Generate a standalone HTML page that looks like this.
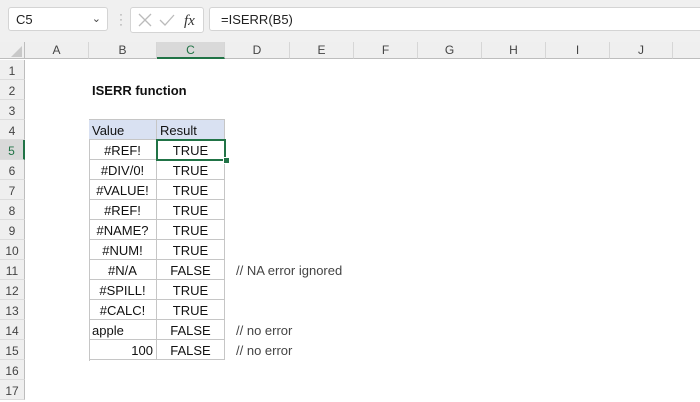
<!DOCTYPE html>
<html><head><style>
body{margin:0;width:700px;height:400px;overflow:hidden;background:#fff;font-family:"Liberation Sans",sans-serif;position:relative}
.top{position:absolute;left:0;top:0;width:700px;height:42px;background:#f0f0f0}
.box{position:absolute;background:#fff;border:1px solid #d4d4d4;border-radius:3px;font-size:13px;color:#222}
.hdr{position:absolute;top:42px;height:17px;background:#efefef;border-bottom:1px solid #bdbdbd;font-size:12px;color:#444;text-align:center;line-height:17px;box-sizing:border-box}
.rh{position:absolute;left:0;width:25px;height:20px;background:#efefef;border-right:1px solid #bdbdbd;border-bottom:1px solid #dcdcdc;font-size:12px;color:#444;text-align:center;line-height:22px;box-sizing:border-box}
.c{position:absolute;height:20px;line-height:22px;font-size:13px;color:#111;box-sizing:border-box;white-space:nowrap}
.t{border-right:1px solid #c6c6c6;border-bottom:1px solid #c6c6c6}
</style></head><body>
<div class="top"></div>
<div class="box" style="left:8px;top:7px;width:100px;height:24px;line-height:24px;padding-left:7px;box-sizing:border-box">C5<span style="position:absolute;right:6px;top:-1px;font-size:11px;color:#444">&#8964;</span></div>
<div style="position:absolute;left:119px;top:12px;color:#999;font-size:12px;line-height:5px">·<br>·<br>·</div>
<div class="box" style="left:130px;top:7px;width:72px;height:24px"><svg width="72" height="24"><path d="M8 6l12 12M20 6L8 18" stroke="#bbb" stroke-width="1.3" fill="none"/><path d="M29 12l5 5 9-10" stroke="#bbb" stroke-width="1.3" fill="none"/><text x="53" y="17" font-family="Liberation Serif" font-style="italic" font-size="15" fill="#333">fx</text></svg></div>
<div class="box" style="left:209px;top:7px;width:500px;height:24px;line-height:24px;padding-left:11px;box-sizing:border-box">=ISERR(B5)</div>
<div class="hdr" style="left:0;width:25px;border-right:1px solid #bdbdbd"><svg width="25" height="17" style="position:absolute;left:0;top:0"><path d="M22 4v11H11z" fill="#c8c8c8"/></svg></div>
<div class="hdr" style="left:25px;width:64px;border-right:1px solid #d6d6d6">A</div>
<div class="hdr" style="left:89px;width:68px;border-right:1px solid #d6d6d6">B</div>
<div class="hdr" style="left:157px;width:68px;border-right:1px solid #d6d6d6;background:#d9d9d9;border-bottom:2px solid #217346;color:#217346">C</div>
<div class="hdr" style="left:225px;width:65px;border-right:1px solid #d6d6d6">D</div>
<div class="hdr" style="left:290px;width:64px;border-right:1px solid #d6d6d6">E</div>
<div class="hdr" style="left:354px;width:64px;border-right:1px solid #d6d6d6">F</div>
<div class="hdr" style="left:418px;width:64px;border-right:1px solid #d6d6d6">G</div>
<div class="hdr" style="left:482px;width:64px;border-right:1px solid #d6d6d6">H</div>
<div class="hdr" style="left:546px;width:64px;border-right:1px solid #d6d6d6">I</div>
<div class="hdr" style="left:610px;width:63px;border-right:1px solid #d6d6d6">J</div>
<div class="hdr" style="left:673px;width:30px"></div>
<div class="rh" style="top:60px">1</div><div class="rh" style="top:80px">2</div><div class="rh" style="top:100px">3</div><div class="rh" style="top:120px">4</div>
<div class="rh" style="top:140px;background:#d9d9d9;border-right:2px solid #217346;color:#217346">5</div>
<div class="rh" style="top:160px">6</div><div class="rh" style="top:180px">7</div><div class="rh" style="top:200px">8</div><div class="rh" style="top:220px">9</div><div class="rh" style="top:240px">10</div><div class="rh" style="top:260px">11</div><div class="rh" style="top:280px">12</div><div class="rh" style="top:300px">13</div><div class="rh" style="top:320px">14</div><div class="rh" style="top:340px">15</div><div class="rh" style="top:360px">16</div><div class="rh" style="top:380px">17</div>
<div class="c" style="left:92px;top:80px;font-weight:bold">ISERR function</div>
<div style="position:absolute;left:89px;top:119px;width:136px;height:242px;border-left:1px solid #c6c6c6;border-top:1px solid #c6c6c6;box-sizing:border-box"></div>
<div class="c t" style="left:89px;top:120px;width:68px;background:#d9e1f2;padding-left:3px">Value</div>
<div class="c t" style="left:157px;top:120px;width:68px;background:#d9e1f2;padding-left:3px">Result</div>
<div class="c t" style="left:89px;top:140px;width:68px;text-align:center">#REF!</div><div class="c t" style="left:157px;top:140px;width:68px;text-align:center">TRUE</div>
<div class="c t" style="left:89px;top:160px;width:68px;text-align:center">#DIV/0!</div><div class="c t" style="left:157px;top:160px;width:68px;text-align:center">TRUE</div>
<div class="c t" style="left:89px;top:180px;width:68px;text-align:center">#VALUE!</div><div class="c t" style="left:157px;top:180px;width:68px;text-align:center">TRUE</div>
<div class="c t" style="left:89px;top:200px;width:68px;text-align:center">#REF!</div><div class="c t" style="left:157px;top:200px;width:68px;text-align:center">TRUE</div>
<div class="c t" style="left:89px;top:220px;width:68px;text-align:center">#NAME?</div><div class="c t" style="left:157px;top:220px;width:68px;text-align:center">TRUE</div>
<div class="c t" style="left:89px;top:240px;width:68px;text-align:center">#NUM!</div><div class="c t" style="left:157px;top:240px;width:68px;text-align:center">TRUE</div>
<div class="c t" style="left:89px;top:260px;width:68px;text-align:center">#N/A</div><div class="c t" style="left:157px;top:260px;width:68px;text-align:center">FALSE</div>
<div class="c t" style="left:89px;top:280px;width:68px;text-align:center">#SPILL!</div><div class="c t" style="left:157px;top:280px;width:68px;text-align:center">TRUE</div>
<div class="c t" style="left:89px;top:300px;width:68px;text-align:center">#CALC!</div><div class="c t" style="left:157px;top:300px;width:68px;text-align:center">TRUE</div>
<div class="c t" style="left:89px;top:320px;width:68px;padding-left:3px">apple</div><div class="c t" style="left:157px;top:320px;width:68px;text-align:center">FALSE</div>
<div class="c t" style="left:89px;top:340px;width:68px;text-align:right;padding-right:3px">100</div><div class="c t" style="left:157px;top:340px;width:68px;text-align:center">FALSE</div>
<div style="position:absolute;left:156px;top:139px;width:70px;height:22px;border:2px solid #217346;box-sizing:border-box"></div>
<div style="position:absolute;left:223px;top:157px;width:5px;height:5px;background:#217346;border:1px solid #fff"></div>
<div class="c" style="left:236px;top:260px;color:#444">// NA error ignored</div>
<div class="c" style="left:236px;top:320px;color:#444">// no error</div>
<div class="c" style="left:236px;top:340px;color:#444">// no error</div>
</body></html>
